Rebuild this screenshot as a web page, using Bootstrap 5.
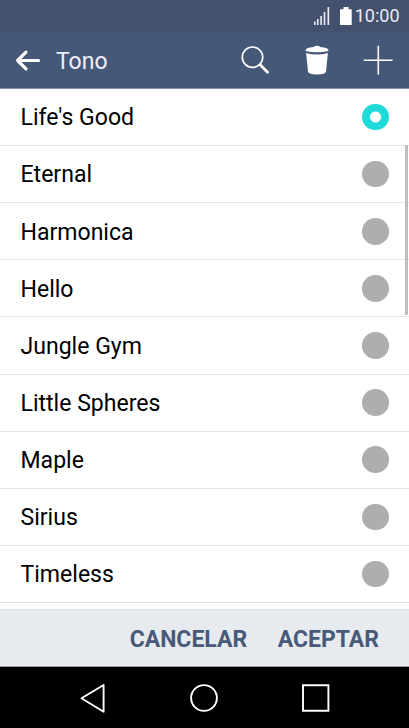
<!DOCTYPE html>
<html lang="es">
<head>
<meta charset="utf-8">
<meta name="viewport" content="width=device-width, initial-scale=1">
<title>Tono</title>
<link href="https://cdn.jsdelivr.net/npm/bootstrap@5.3.0/dist/css/bootstrap.min.css" rel="stylesheet">
<style>
body{font-family:Roboto,"Liberation Sans",sans-serif;color:#111;overflow:hidden}
svg{display:block;flex:none}
.screen{height:728px}
.status-strip{height:32px;background:#43506e;color:#e8ebf2;font-size:18px;line-height:34px;padding-right:9.500px}
.status-strip span{margin-left:2px}
.title-bar{height:57px;background:#465878;border-bottom:1px solid #8492a4;padding-left:15px;padding-right:16px}
.title-bar h1{font-size:23px;line-height:30px;color:#edf0fa;margin-left:15px;padding-top:3px}
.title-bar .btn{line-height:1}
.title-actions{gap:34px}
.tones{height:520px}
.tones .list-group-item{height:57.15px;padding:0 20px 0 20.5px;font-size:23.050px;line-height:30px;color:#000;border-color:#e6e6e6}
.tones .list-group-item:first-child{height:57px}
.tones .list-group-item span{padding-top:2.6px}
.tone-radio.form-check-input{width:26.6px;height:26.6px;margin:0;border:0;background:#aeaeae;box-shadow:none;flex:none}
.tone-radio.form-check-input:checked{background:radial-gradient(circle,#fff 5px,#20dada 6px)}
.scroll-thumb{right:1px;top:56px;width:3px;height:170px;background:#bdbdbd;border-radius:1px}
.action-bar{height:58px;background:#e7eaee;border-top:1px solid #dedfe1;border-bottom:1px solid #999da2;padding-right:30px;gap:30.500px}
.action-bar .btn{font-size:23px;line-height:30px;font-weight:700;color:#475a7a;padding-top:3px!important}
.system-nav{height:61px}
</style>
</head>
<body>
<div class="screen d-flex flex-column bg-white">
  <div class="status-strip d-flex justify-content-end align-items-center">
    <svg width="40" height="32" viewBox="0 0 40 32" fill="#e8ebf2"><path d="M1 21.500h1.600v3.500H1zM4 19h1.600v6H4zM7.300 16h1.600v9H7.300zM10.700 12h1.600v13h-1.600zM14.500 7h1.700v18h-1.700z"/><path d="M30.500 7h5v2.200h3.200V25H27V9.200h3.500z" fill="#fff"/></svg>
    <span>10:00</span>
  </div>
  <header class="title-bar d-flex align-items-center">
    <button class="btn p-0 border-0" aria-label="Atrás"><svg width="26" height="24" viewBox="0 0 26 24" fill="none" stroke="#fff" stroke-width="3.200" stroke-linecap="round" stroke-linejoin="round"><path d="M23.500 12.500H3M11 4.200L2.600 12.500l8.400 8.300"/></svg></button>
    <h1 class="mb-0 fw-normal me-auto">Tono</h1>
    <div class="title-actions d-flex align-items-center">
      <button class="btn p-0 border-0" aria-label="Buscar"><svg width="30" height="30" viewBox="0 0 30 30" fill="none" stroke="#fff"><circle cx="11.500" cy="12.200" r="10.200" stroke-width="1.700"/><path d="M19.100 19.800L26.600 27.300" stroke-width="2.800" stroke-linecap="round"/></svg></button>
      <button class="btn p-0 border-0" aria-label="Eliminar"><svg width="24" height="30" viewBox="0 0 24 30" fill="#fff"><path d="M.7 6V4.800Q1.500 3 5 2.500L9 2Q9.300.700 12 .7t3 1.300l4 .5q3.500.5 4.300 2.300V6Q18 7.300 12 7.300T.7 6zM1.100 8Q6 9.500 12 9.500T22.900 8L21 26.500Q20.700 29.500 12 29.500T3 26.500z"/></svg></button>
      <button class="btn p-0 border-0" aria-label="Añadir"><svg width="30" height="30" viewBox="0 0 30 30" stroke="#fff" stroke-width="1.600"><path d="M.8 15.200h28.800M15.300.800v28.800"/></svg></button>
    </div>
  </header>
  <main class="position-relative tones overflow-hidden">
    <div class="list-group list-group-flush">
      <label class="list-group-item d-flex align-items-center justify-content-between"><span>Life's Good</span><input class="form-check-input tone-radio" type="radio" name="tone" checked></label>
      <label class="list-group-item d-flex align-items-center justify-content-between"><span>Eternal</span><input class="form-check-input tone-radio" type="radio" name="tone"></label>
      <label class="list-group-item d-flex align-items-center justify-content-between"><span>Harmonica</span><input class="form-check-input tone-radio" type="radio" name="tone"></label>
      <label class="list-group-item d-flex align-items-center justify-content-between"><span>Hello</span><input class="form-check-input tone-radio" type="radio" name="tone"></label>
      <label class="list-group-item d-flex align-items-center justify-content-between"><span>Jungle Gym</span><input class="form-check-input tone-radio" type="radio" name="tone"></label>
      <label class="list-group-item d-flex align-items-center justify-content-between"><span>Little Spheres</span><input class="form-check-input tone-radio" type="radio" name="tone"></label>
      <label class="list-group-item d-flex align-items-center justify-content-between"><span>Maple</span><input class="form-check-input tone-radio" type="radio" name="tone"></label>
      <label class="list-group-item d-flex align-items-center justify-content-between"><span>Sirius</span><input class="form-check-input tone-radio" type="radio" name="tone"></label>
      <label class="list-group-item d-flex align-items-center justify-content-between border-bottom"><span>Timeless</span><input class="form-check-input tone-radio" type="radio" name="tone"></label>
    </div>
    <div class="scroll-thumb position-absolute"></div>
  </main>
  <footer class="action-bar d-flex justify-content-end align-items-center">
    <button class="btn p-0 border-0">CANCELAR</button>
    <button class="btn p-0 border-0">ACEPTAR</button>
  </footer>
  <nav class="system-nav bg-black d-flex justify-content-center" aria-label="Sistema">
    <svg width="409" height="61" viewBox="0 0 409 61" fill="none" stroke="#fff" stroke-width="1.900"><path d="M103.600 18v26.800L81.500 31.300z" stroke-linejoin="round"/><circle cx="204" cy="31" r="12.900"/><path d="M303 18.300h25.400v25.400H303z"/></svg>
  </nav>
</div>
<script src="https://cdn.jsdelivr.net/npm/bootstrap@5.3.0/dist/js/bootstrap.bundle.min.js"></script>
</body>
</html>
